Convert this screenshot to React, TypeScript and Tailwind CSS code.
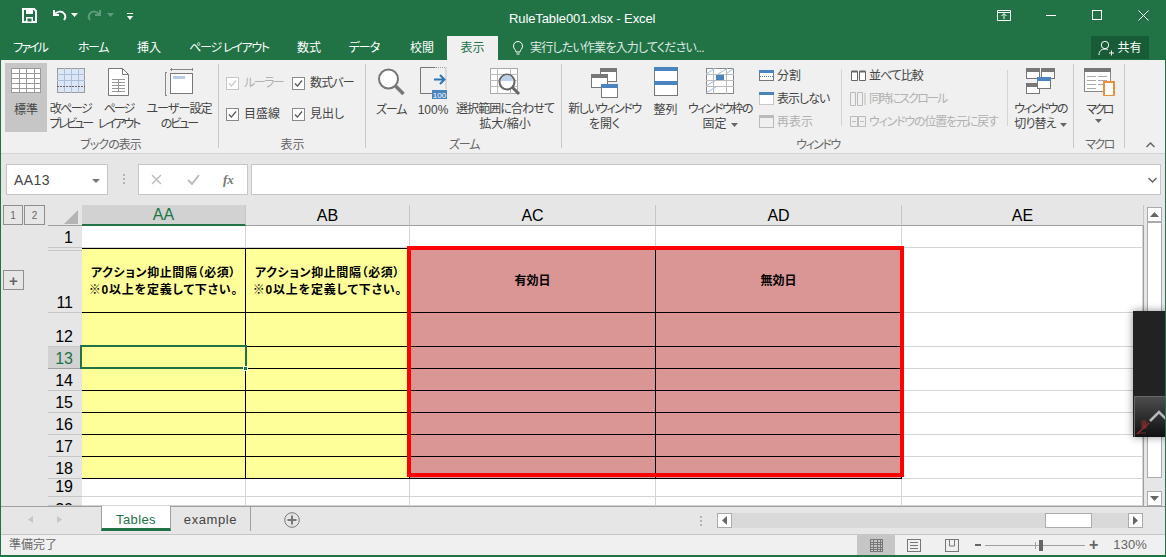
import type { ReactNode } from 'react'

const GREEN = '#217346'

type Line = [string, string?]

function GridIcon({ w = 30, h = 25, line = '#9a9a9a', bg = '#fff' }: { w?: number; h?: number; line?: string; bg?: string }) {
  const cols = [0.25, 0.5, 0.75]
  const rows = [0.2, 0.4, 0.6, 0.8]
  return (
    <svg width={w} height={h} viewBox={`0 0 ${w} ${h}`}>
      <rect x="0.5" y="0.5" width={w - 1} height={h - 1} fill={bg} stroke={line} />
      {cols.map((c) => <path key={c} d={`M${Math.round(w * c) + 0.5} 0V${h}`} stroke={line} />)}
      {rows.map((r) => <path key={r} d={`M0 ${Math.round(h * r) + 0.5}H${w}`} stroke={line} />)}
    </svg>
  )
}

function Caret() {
  return <svg className="ml-[4px] inline-block align-middle" width="7" height="4" viewBox="0 0 7 4"><path d="M0 0h7L3.500 4z" fill="#666" /></svg>
}

function RibbonButton({ width, active, icon, lines, caret }: { width: number; active?: boolean; icon: ReactNode; lines: Line[]; caret?: boolean }) {
  return (
    <div style={{ width }} className={`flex h-[69px] shrink-0 flex-col items-center ${active ? 'bg-[#c6c6c6]' : ''}`}>
      <div className="flex h-[40px] w-full items-start justify-center pt-[5px]">{icon}</div>
      <div className="whitespace-nowrap text-center text-[12px] leading-[15px] text-[#444]">
        {lines.map(([text, cls], i) => (
          <div key={text} className={cls}>
            {text}
            {caret && i === lines.length - 1 && <Caret />}
          </div>
        ))}
      </div>
    </div>
  )
}

function Group({ width, label, labelClass = '', children }: { width: number; label: string; labelClass?: string; children: ReactNode }) {
  return (
    <div style={{ width }} className="relative flex h-full shrink-0 flex-col">
      <div className="flex h-[77px] pt-[3px]">{children}</div>
      <div className={`h-[16px] text-center text-[12px] leading-[16px] text-[#666] ${labelClass}`}>{label}</div>
      <div className="absolute right-0 top-[4px] h-[84px] w-px bg-[#c8c8c8]" />
    </div>
  )
}

function Check({ label, disabled, w, cls = '' }: { label: string; disabled?: boolean; w: number; cls?: string }) {
  return (
    <div style={{ width: w }} className="flex items-center gap-[5px]">
      <span className={`flex h-[13px] w-[13px] items-center justify-center border bg-white ${disabled ? 'border-[#c6c6c6]' : 'border-[#8a8a8a]'}`}>
        <svg width="9" height="9" viewBox="0 0 9 9"><path d="M1 4.500l2.400 2.600L8 1.500" fill="none" stroke={disabled ? '#c6c6c6' : '#555'} strokeWidth="1.300" /></svg>
      </span>
      <span className={`whitespace-nowrap text-[12px] ${disabled ? 'text-[#b1b1b1]' : 'text-[#444]'} ${cls}`}>{label}</span>
    </div>
  )
}

function WindowIcon({ x, y, w, h, fill = '#777', bg = '#fff' }: { x: number; y: number; w: number; h: number; fill?: string; bg?: string }) {
  return (
    <g>
      <rect x={x + 0.5} y={y + 0.5} width={w - 1} height={h - 1} fill={bg} stroke="#777" />
      <rect x={x} y={y} width={w} height="4" fill={fill} />
    </g>
  )
}

function SmallRow({ icon, label, disabled, cls = '' }: { icon: ReactNode; label: string; disabled?: boolean; cls?: string }) {
  return (
    <div className="flex h-[23px] items-center gap-[2px] whitespace-nowrap">
      <span className="flex w-[18px] justify-center">{icon}</span>
      <span className={`text-[12px] ${disabled ? 'text-[#b1b1b1]' : 'text-[#444]'} ${cls}`}>{label}</span>
    </div>
  )
}

const tabs = [
  { label: 'ファイル', w: 58, cls: 'tracking-[-2px]' },
  { label: 'ホーム', w: 68, cls: 'tracking-[-1.500px]' },
  { label: '挿入', w: 44, cls: '' },
  { label: 'ページ レイアウト', w: 116, cls: 'tracking-[-1.300px]' },
  { label: '数式', w: 44, cls: '' },
  { label: 'データ', w: 66, cls: 'tracking-[-1px]' },
  { label: '校閲', w: 50, cls: '' },
]

const columns = [
  { label: 'AA', w: 164 },
  { label: 'AB', w: 164 },
  { label: 'AC', w: 246 },
  { label: 'AD', w: 246 },
  { label: 'AE', w: 242 },
]

const rows = [
  { n: '1', h: 22, kind: 'blank' },
  { n: '11', h: 65, kind: 'head' },
  { n: '12', h: 34, kind: 'data' },
  { n: '13', h: 22, kind: 'data' },
  { n: '14', h: 22, kind: 'data' },
  { n: '15', h: 22, kind: 'data' },
  { n: '16', h: 22, kind: 'data' },
  { n: '17', h: 22, kind: 'data' },
  { n: '18', h: 22, kind: 'data' },
  { n: '19', h: 18, kind: 'blank' },
  { n: '20', h: 9, kind: 'blank' },
]

function cellClass(kind: string, col: number) {
  if (kind === 'blank' || col === 4) return 'border-r border-b border-[#d4d4d4] bg-white'
  const fill = col < 2 ? 'bg-[#ffff99]' : 'bg-[#da9694]'
  return `border-r border-b border-black ${fill}`
}

function rowHeadClass(n: string) {
  if (n === '13') return 'items-end border-[#9f9f9f] bg-[#d2d2d2] text-[#217346]'
  if (n === '20') return 'items-start pt-[3px] border-[#c6c6c6] text-black'
  if (n === '11') return 'items-end border-[#c6c6c6] text-black shadow-[inset_0_2px_0_#e6e6e6,inset_0_3px_0_#c6c6c6]'
  return 'items-end border-[#c6c6c6] text-black'
}

function ScrollBtn({ d }: { d: string }) {
  return (
    <div className="flex h-[15px] w-[15px] shrink-0 items-center justify-center border border-[#ababab] bg-white">
      <svg width="9" height="9" viewBox="0 0 9 9"><path d={d} fill="#666" /></svg>
    </div>
  )
}

export default function App() {
  return (
    <div className="relative flex h-[557px] w-[1166px] flex-col overflow-hidden border-x-[1px] border-b-[2px] border-[#217346] bg-[#e6e6e6] font-['Liberation_Sans','Noto_Sans_CJK_JP',sans-serif] [font-feature-settings:'palt']">
      {/* title bar */}
      <div style={{ background: GREEN }} className="relative flex h-[36px] shrink-0 items-center pb-[6px] text-white">
        <svg className="ml-[21px]" width="15" height="15" viewBox="0 0 15 15"><path d="M1 1h11l2 2v11H1z" fill="none" stroke="#fff" strokeWidth="2" /><path d="M4 1h7v5H4zM4 9h7v5H4z" fill="#fff" /><path d="M5.500 10.500h4v3h-4z" fill="#217346" /></svg>
        <svg className="ml-[14px]" width="16" height="14" viewBox="0 0 16 14"><path d="M3 2v5h5M3.500 6.500C6 3 11 2.500 13.500 6c1 1.500 1 4 -.5 6" fill="none" stroke="#fff" strokeWidth="2" /></svg>
        <svg className="ml-[4px]" width="7" height="4" viewBox="0 0 7 4"><path d="M0 0h7L3.500 4z" fill="#fff" /></svg>
        <svg className="ml-[9px]" width="16" height="14" viewBox="0 0 16 14"><path d="M13 2v5H8M12.500 6.500C10 3 5 2.500 2.500 6c-1 1.500-1 4 .5 6" fill="none" stroke="#5f9c7d" strokeWidth="2" /></svg>
        <svg className="ml-[4px]" width="7" height="4" viewBox="0 0 7 4"><path d="M0 0h7L3.500 4z" fill="#5f9c7d" /></svg>
        <svg className="ml-[13px] mt-[2px]" width="6" height="7" viewBox="0 0 6 7"><path d="M0 0h6v1H0zM0 3h6L3 7z" fill="#fff" /></svg>
        <div className="absolute left-[508px] top-[10px] text-[13px] leading-[18px] tracking-[-0.1px]">RuleTable001.xlsx - Excel</div>
        <div className="ml-auto flex items-center">
          <svg width="14" height="11" viewBox="0 0 14 11"><path d="M.5.500h13v10H.5zM0 2.500h14M7 9V4M4.500 6L7 3.500 9.500 6" fill="none" stroke="#fff" /></svg>
          <div className="ml-[35px] h-px w-[10px] bg-white" />
          <div className="ml-[36px] h-[10px] w-[10px] border border-white" />
          <svg className="ml-[36px] mr-[16px]" width="11" height="11" viewBox="0 0 11 11"><path d="M.5.500l10 10M10.500.500l-10 10" stroke="#fff" /></svg>
        </div>
      </div>
      {/* ribbon tabs */}
      <div style={{ background: GREEN }} className="flex h-[24px] shrink-0 text-[12px] text-white">
        {tabs.map((t) => (
          <div key={t.label} style={{ width: t.w }} className={`flex items-center justify-center whitespace-nowrap ${t.cls}`}>{t.label}</div>
        ))}
        <div className="flex w-[51px] items-center justify-center bg-[#f0f0f0] text-[#217346]">表示</div>
        <svg className="ml-[15px] mt-[5px]" width="10" height="15" viewBox="0 0 10 15"><path d="M3 11c0-2-2.500-3-2.500-6a4.500 4.500 0 019 0c0 3-2.500 4-2.500 6zM3.500 13h3" fill="none" stroke="#fff" /></svg>
        <div className="ml-[7px] flex items-center whitespace-nowrap tracking-[-0.800px] text-[#dfe9e3]">実行したい作業を入力してください...</div>
        <div className="ml-auto mr-[16px] flex h-[23px] w-[58px] items-center justify-center gap-[2px] bg-[#185c37]">
          <svg width="17" height="16" viewBox="0 0 17 16"><circle cx="7" cy="5" r="3.700" fill="none" stroke="#fff" /><path d="M1 15c0-4 2.500-6 6-6 1 0 2 .2 2.800.7M11 13h5M13.500 10.500v5" fill="none" stroke="#fff" /></svg>
          <span className="text-white">共有</span>
        </div>
      </div>
      {/* ribbon */}
      <div className="flex h-[94px] shrink-0 border-b border-[#d4d4d4] bg-[#f0f0f0] pl-[1px]">
        <Group width={217} label="ブックの表示" labelClass="tracking-[-1px]">
          <div className="w-[3px]" />
          <RibbonButton width={42} active lines={[['標準']]} icon={<GridIcon />} />
          <RibbonButton width={47} lines={[['改ページ', 'tracking-[-1.500px]'], ['プレビュー', 'tracking-[-2.500px]']]} icon={
            <svg width="28" height="25" viewBox="0 0 28 25"><rect x=".5" y=".5" width="27" height="24" fill="#dce6f4" stroke="#9a9a9a" /><path d="M0 6.500h28M0 12.500h28M7.500 0v25M14.500 0v25M21.500 0v25" stroke="#a9bfdc" /><path d="M0 18.500h28" stroke="#666" strokeDasharray="2 1" /></svg>
          } />
          <RibbonButton width={49} lines={[['ページ', 'tracking-[-2px]'], ['レイアウト', 'tracking-[-2.200px]']]} icon={
            <svg width="21" height="28" viewBox="0 0 21 28"><path d="M.5.500h14l6 6v21H.5z" fill="#fff" stroke="#777" /><path d="M14.500.500v6h6" fill="none" stroke="#777" /><path d="M4 11.500h13M4 14.500h13M4 17.500h13M4 20.500h13M4 23.500h13M10.500 11v13" stroke="#999" /></svg>
          } />
          <RibbonButton width={72} lines={[['ユーザー設定', 'tracking-[-0.900px]'], ['のビュー', 'tracking-[-2px]']]} icon={
            <svg width="28" height="28" viewBox="0 0 28 28"><path d="M5 1.500h23M.500 5v22" stroke="#888" /><path d="M0 4.500h2M0 27.500h2M6.500 0v3M27.500 0v3" stroke="#888" /><rect x="5.500" y="5.500" width="22" height="20" fill="#fff" stroke="#777" /><rect x="8" y="8" width="12" height="3" fill="#b9cce4" /></svg>
          } />
        </Group>
        <Group width={147} label="表示">
          <div className="flex flex-col gap-[13px] pl-[7px] pt-[11px]">
            <div className="flex h-[18px] items-center"><Check w={66} disabled label="ルーラー" cls="tracking-[-1.500px]" /><Check w={66} label="数式バー" cls="tracking-[-0.800px]" /></div>
            <div className="flex h-[18px] items-center"><Check w={66} label="目盛線" /><Check w={66} label="見出し" /></div>
          </div>
        </Group>
        <Group width={196} label="ズーム" labelClass="tracking-[-1.200px]">
          <div className="w-[6px]" />
          <RibbonButton width={38} lines={[['ズーム', 'tracking-[-1.200px]']]} icon={
            <svg width="28" height="28" viewBox="0 0 28 28"><circle cx="11.500" cy="11" r="9.500" fill="#fff" stroke="#777" strokeWidth="2" /><path d="M18.500 18l8 8" stroke="#777" strokeWidth="3.500" /></svg>
          } />
          <RibbonButton width={46} lines={[['100%']]} icon={
            <svg className="-mt-px" width="27" height="32" viewBox="0 0 27 32"><path d="M.5.500h15M.5.500v26h12" fill="none" stroke="#777" /><path d="M16 .5h10v21" fill="none" stroke="#999" strokeDasharray="1 1" /><path d="M14 12.500h10M20 8l4.500 4.500L20 17" fill="none" stroke="#2f75b5" strokeWidth="2" /><rect x="12" y="23" width="15" height="9" fill="#4a83bd" /><text x="19.500" y="30.500" textAnchor="middle" fontSize="8" fontFamily="Liberation Sans" fill="#fff">100</text></svg>
          } />
          <RibbonButton width={98} lines={[['選択範囲に合わせて', 'tracking-[-0.900px]'], ['拡大/縮小']]} icon={
            <svg width="31" height="29" viewBox="0 0 31 29"><rect x=".5" y=".5" width="27" height="25" fill="#fff" stroke="#aaa" /><path d="M0 6.500h28M0 12.500h28M0 18.500h28M7.500 0v26M20.500 0v26" stroke="#bbb" /><circle cx="17" cy="14" r="7.500" fill="#fff" stroke="#666" strokeWidth="2" /><path d="M11 13a6 6 0 0112 0z" fill="#bcd0e8" /><path d="M22 19l7 7" stroke="#666" strokeWidth="3" /></svg>
          } />
        </Group>
        <Group width={512} label="ウィンドウ" labelClass="tracking-[-1.500px]">
          <RibbonButton width={85} lines={[['新しいウィンドウ', 'tracking-[-1.500px]'], ['を開く']]} icon={
            <svg className="-mt-px" width="27" height="31" viewBox="0 0 27 31"><WindowIcon x={9} y={1} w={17} h={14} /><WindowIcon x={0} y={7} w={17} h={14} /><WindowIcon x={10} y={17} w={17} h={14} fill="#4a83bd" /></svg>
          } />
          <RibbonButton width={37} lines={[['整列']]} icon={
            <svg className="-mt-px" width="24" height="29" viewBox="0 0 24 29"><rect x=".5" y=".5" width="23" height="28" fill="#fff" stroke="#777" /><rect width="24" height="4" fill="#4a83bd" /><rect y="14" width="24" height="4" fill="#4a83bd" /></svg>
          } />
          <RibbonButton width={72} caret lines={[['ウィンドウ枠の', 'tracking-[-1.500px]'], ['固定']]} icon={
            <svg width="28" height="26" viewBox="0 0 28 26"><rect x=".5" y=".5" width="27" height="25" fill="#fff" stroke="#888" /><path d="M0 6.500h28M0 12.500h28M0 18.500h28M7.500 0v26M20.500 0v26" stroke="#bbb" /><path d="M0 6l10-6M12 6l10-6M0 18l10-6M0 25l10-6M20 6l8-6" stroke="#9fbbdc" /><rect x="10" y="7" width="8" height="5" fill="#4a83bd" /></svg>
          } />
          <div className="ml-[1px] w-[84px] pt-[1px]">
            <SmallRow label="分割" icon={<svg width="15" height="11" viewBox="0 0 15 11"><rect x=".5" y=".5" width="14" height="10" fill="#fff" stroke="#777" /><rect width="15" height="3" fill="#4a83bd" /><path d="M1 6.500h13" stroke="#4a83bd" strokeDasharray="1 1" /></svg>} />
            <SmallRow label="表示しない" cls="tracking-[-1px]" icon={<svg width="15" height="13" viewBox="0 0 15 13"><rect x=".5" y=".5" width="14" height="12" fill="#fff" stroke="#999" strokeDasharray="1 1" /><rect width="15" height="3" fill="#4a83bd" /></svg>} />
            <SmallRow disabled label="再表示" icon={<svg width="15" height="13" viewBox="0 0 15 13"><rect x=".5" y=".5" width="14" height="12" fill="#f0f0f0" stroke="#bbb" /><rect width="15" height="3" fill="#bbb" /></svg>} />
          </div>
          <div className="mt-[7px] h-[56px] w-px bg-[#d4d4d4]" />
          <div className="w-[165px] pl-[7px] pt-[1px]">
            <SmallRow label="並べて比較" cls="tracking-[-1px]" icon={<svg width="15" height="11" viewBox="0 0 15 11"><path d="M.5 1.500h6v9h-6zM8.500 1.500h6v9h-6z" fill="#fff" stroke="#666" /><path d="M.5 1.500h6M8.500 1.500h6" stroke="#666" strokeWidth="2" /></svg>} />
            <SmallRow disabled label="同時にスクロール" cls="tracking-[-1.800px]" icon={<svg width="17" height="14" viewBox="0 0 17 14"><path d="M.5.500h5v13h-5zM7.500.500h5v13h-5z" fill="#f0f0f0" stroke="#bbb" /><path d="M15 1v12" stroke="#bbb" /></svg>} />
            <SmallRow disabled label="ウィンドウの位置を元に戻す" cls="tracking-[-1.200px]" icon={<svg width="16" height="11" viewBox="0 0 16 11"><path d="M.5.500h7v10h-7zM8.500.500h7v10h-7z" fill="#f0f0f0" stroke="#bbb" /><path d="M2 5.500h4M10 5.500h4" stroke="#bbb" /></svg>} />
          </div>
          <div className="mt-[7px] h-[56px] w-px bg-[#d4d4d4]" />
          <RibbonButton width={65} caret lines={[['ウィンドウの', 'tracking-[-1.700px]'], ['切り替え', 'tracking-[-0.800px]']]} icon={
            <svg width="29" height="26" viewBox="0 0 29 26"><WindowIcon x={0} y={0} w={14} h={11} /><WindowIcon x={15} y={0} w={14} h={11} /><WindowIcon x={0} y={15} w={14} h={11} /><WindowIcon x={11} y={9} w={14} h={12} fill="#4a83bd" /></svg>
          } />
        </Group>
        <Group width={51} label="マクロ" labelClass="tracking-[-1.500px]">
          <RibbonButton width={50} lines={[['マクロ', 'tracking-[-2.500px]']]} icon={
            <svg width="31" height="28" viewBox="0 0 31 28"><rect x=".5" y=".5" width="26" height="23" fill="#fff" stroke="#888" /><rect width="27" height="4" fill="#777" /><path d="M3 8.500h9M14 8.500h9M3 12.500h9M14 12.500h9M3 16.500h9M14 16.500h6M3 20.500h9" stroke="#aaa" /><path d="M21 14h9v12c0 1-1 2-2 2h-7c-1 0-1-1-1-2V14z" fill="#fff" stroke="#ed8e3b" strokeWidth="2" /></svg>
          } />
          <svg className="absolute left-[21px] top-[59px]" width="7" height="4" viewBox="0 0 7 4"><path d="M0 0h7L3.500 4z" fill="#666" /></svg>
        </Group>
        <svg className="ml-[21px] mt-[82px]" width="9" height="6" viewBox="0 0 9 6"><path d="M.5 5l4-4 4 4" fill="none" stroke="#666" strokeWidth="1.500" /></svg>
      </div>
      {/* formula bar */}
      <div className="flex h-[51px] shrink-0 pl-[5px] pt-[10px]">
        <div className="flex h-[31px] w-[102px] items-center justify-between border border-[#c6c6c6] bg-white px-[7px] pt-[2px] text-[14px] tracking-[0.4px] text-[#444]">
          AA13
          <svg width="8" height="4" viewBox="0 0 8 4"><path d="M0 0h8L4 4z" fill="#777" /></svg>
        </div>
        <div className="ml-[15px] mt-[10px] flex flex-col gap-[2px]">
          {[0, 1, 2].map((i) => <div key={i} className="h-[2px] w-[2px] bg-[#b3b3b3]" />)}
        </div>
        <div className="ml-[13px] flex h-[31px] w-[110px] items-center border border-[#c6c6c6] bg-white">
          <svg className="ml-[12px]" width="11" height="11" viewBox="0 0 11 11"><path d="M1 1l9 9M10 1l-9 9" stroke="#bdbdbd" strokeWidth="1.500" /></svg>
          <svg className="ml-[25px]" width="13" height="11" viewBox="0 0 13 11"><path d="M1 6l4 4 7-9" fill="none" stroke="#bdbdbd" strokeWidth="2" /></svg>
          <span className="ml-[23px] font-['Liberation_Serif',serif] text-[13px] font-bold italic text-[#777]">fx</span>
        </div>
        <div className="relative ml-[3px] h-[31px] w-[910px] border border-[#c6c6c6] bg-white">
          <svg className="absolute right-[3px] top-[12px]" width="9" height="6" viewBox="0 0 9 6"><path d="M.5 1l4 4 4-4" fill="none" stroke="#666" strokeWidth="1.500" /></svg>
        </div>
      </div>
      {/* sheet */}
      <div className="flex h-[301px] shrink-0">
        <div className="w-[47px] shrink-0 pl-[2px]">
          <div className="flex h-[21px] gap-px">
            <div className="flex h-[20px] w-[20px] items-center justify-center border border-[#8f8f8f] text-[10px] text-[#666]">1</div>
            <div className="flex h-[20px] w-[21px] items-center justify-center border border-[#8f8f8f] text-[10px] text-[#666]">2</div>
          </div>
          <div className="ml-0 mt-[44px] flex h-[20px] w-[21px] items-center justify-center border border-[#8f8f8f] text-[15px] font-bold leading-none text-[#666]">+</div>
        </div>
        <div className="w-[34px] shrink-0">
          <div className="flex h-[21px] items-end justify-end border-b border-[#9f9f9f] pb-[1px] pr-[4px]">
            <div className="h-0 w-0 border-b-[14px] border-l-[14px] border-b-[#b4b4b4] border-l-transparent" />
          </div>
          {rows.map((r) => (
            <div key={r.n} style={{ height: r.h }} className={`flex justify-end overflow-hidden border-b pr-[9px] text-[16px] leading-[19px] ${rowHeadClass(r.n)}`}>{r.n}</div>
          ))}
        </div>
        <div className="relative w-[1062px] shrink-0">
          <div className="flex h-[21px]">
            {columns.map((c, i) => (
              <div key={c.label} style={{ width: c.w }} className={`flex items-center justify-center border-r border-r-[#c6c6c6] pt-px text-[16px] ${i === 0 ? 'border-b-2 border-b-[#217346] bg-[#d2d2d2] text-[#217346]' : 'border-b border-b-[#9f9f9f] text-black'}`}>{c.label}</div>
            ))}
          </div>
          <div className="border-r border-[#9f9f9f]">
            {rows.map((r) => (
              <div key={r.n} style={{ height: r.h }} className="flex">
                {columns.map((c, i) => (
                  <div key={c.label} style={{ width: i === 4 ? c.w - 1 : c.w }} className={`flex flex-col items-center justify-center whitespace-nowrap text-center text-[12px] font-bold leading-[17px] text-black ${cellClass(r.kind, i)} ${r.n === '11' && i < 4 ? 'border-t pt-[2px]' : ''}`}>
                    {r.kind === 'head' && i < 2 && (
                      <>
                        <div className="tracking-[0.6px]">アクション抑止間隔（必須）</div>
                        <div className="tracking-[0.800px]">※0以上を定義して下さい。</div>
                      </>
                    )}
                    {r.kind === 'head' && i === 2 && '有効日'}
                    {r.kind === 'head' && i === 3 && '無効日'}
                  </div>
                ))}
              </div>
            ))}
          </div>
          {/* active cell and the red highlight frame lie over the grid */}
          <div className="absolute left-[-2px] top-[140px] h-[24px] w-[167px] border-2 border-[#217346]" />
          <div className="absolute left-[161px] top-[161px] h-[5px] w-[5px] border border-white bg-[#217346]" />
          <div className="absolute left-[325px] top-[41px] h-[231px] w-[497px] border-4 border-[#ff0000]" />
        </div>
        <div className="ml-[3px] flex w-[15px] shrink-0 flex-col pt-[2px]">
          <ScrollBtn d="M0 7L4.500 2 9 7z" />
          <div className="h-[256px] border border-[#ababab] bg-white" />
          <div className="mt-auto"><ScrollBtn d="M0 2h9L4.500 7z" /></div>
        </div>
      </div>
      {/* sheet tabs and horizontal scrollbar */}
      <div className="flex h-[28px] shrink-0 border-t border-[#9f9f9f]">
        <div className="flex w-[100px] items-center pb-[2px] pl-[27px]">
          <svg width="5" height="7" viewBox="0 0 5 7"><path d="M5 0v7L0 3.500z" fill="#c6c6c6" /></svg>
          <svg className="ml-[24px]" width="5" height="7" viewBox="0 0 5 7"><path d="M0 0v7l5-3.500z" fill="#c6c6c6" /></svg>
        </div>
        <div className="mt-[-1px] flex h-[25px] w-[70px] items-center justify-center border-x border-b-[3px] border-x-[#9f9f9f] border-b-[#217346] bg-white pt-[5px] text-[13px] tracking-[0.4px] text-[#217346]">Tables</div>
        <div className="flex h-[24px] w-[80px] items-center justify-center border-r border-[#9f9f9f] pt-[2px] text-[13px] tracking-[0.6px] text-[#444]">example</div>
        <svg className="ml-[33px] mt-[5px]" width="16" height="16" viewBox="0 0 16 16"><circle cx="8" cy="8" r="7.300" fill="none" stroke="#777" /><path d="M8 3.500v9M3.500 8h9" stroke="#777" strokeWidth="2" /></svg>
        <div className="ml-[400px] mt-[9px] flex flex-col gap-[2px]">
          {[0, 1, 2].map((i) => <div key={i} className="h-[2px] w-[2px] bg-[#b3b3b3]" />)}
        </div>
        <div className="ml-[15px] mt-[6px] flex h-[15px] w-[426px] bg-[#d9d9d9]">
          <ScrollBtn d="M7 0v9L2 4.500z" />
          <div className="ml-[313px] h-[15px] w-[47px] border border-[#ababab] bg-white" />
          <div className="ml-auto"><ScrollBtn d="M2 0v9l5-4.500z" /></div>
        </div>
      </div>
      {/* status bar */}
      <div className="flex h-[21px] shrink-0 items-center border-t border-[#c6c6c6] bg-[#f0f0f0] pl-[8px] text-[12px] text-[#666]">
        準備完了
        <div className="ml-auto flex h-full items-center">
          <div className="flex h-full w-[38px] items-center justify-center bg-[#c6c6c6]"><GridIcon w={13} h={13} line="#777" bg="transparent" /></div>
          <div className="flex w-[38px] justify-center">
            <svg width="14" height="13" viewBox="0 0 14 13"><rect x=".5" y=".5" width="13" height="12" fill="none" stroke="#777" /><path d="M3 3.500h8M3 6.500h8M3 9.500h8" stroke="#777" /></svg>
          </div>
          <div className="flex w-[38px] justify-center">
            <svg width="14" height="13" viewBox="0 0 14 13"><rect x=".5" y=".5" width="13" height="12" fill="none" stroke="#777" /><path d="M4.500 0v7h5V0" fill="none" stroke="#777" /></svg>
          </div>
          <div className="ml-[4px] h-[2px] w-[6px] bg-[#666]" />
          <div className="relative ml-[4px] h-px w-[100px] bg-[#a0a0a0]">
            <div className="absolute left-[50px] top-[-3px] h-[7px] w-px bg-[#a0a0a0]" />
            <div className="absolute left-[54px] top-[-5px] h-[11px] w-[4px] bg-[#666]" />
          </div>
          <div className="ml-[4px] text-[16px] font-bold leading-none text-[#666]">+</div>
          <div className="ml-[15px] mr-[18px] text-[13px] tracking-[0.1px] text-[#666]">130%</div>
        </div>
      </div>
      {/* floating dark widget sitting over the window edge */}
      <div className="absolute left-[1132px] top-[311px] flex h-[126px] w-[34px] flex-col justify-end bg-[#222] shadow-[0_0_8px_rgba(0,0,0,0.45)]">
        <div className="relative ml-px h-[41px] border-l border-t border-[#666] bg-gradient-to-b from-[#4d4d4d] to-[#111]">
          <svg className="absolute left-[14px] top-[13px]" width="19" height="12" viewBox="0 0 19 12"><path d="M1 11l9-9 9 9" fill="none" stroke="#b8b8b8" strokeWidth="2.500" /></svg>
          <svg className="absolute left-[1px] top-[23px]" width="14" height="15" viewBox="0 0 14 15"><path d="M6 1h4v7H6zM3 13h7" fill="#6e2a2a" stroke="#6e2a2a" /><path d="M1 14L13 3" stroke="#8a2f2f" strokeWidth="1.500" /></svg>
        </div>
      </div>
    </div>
  )
}
